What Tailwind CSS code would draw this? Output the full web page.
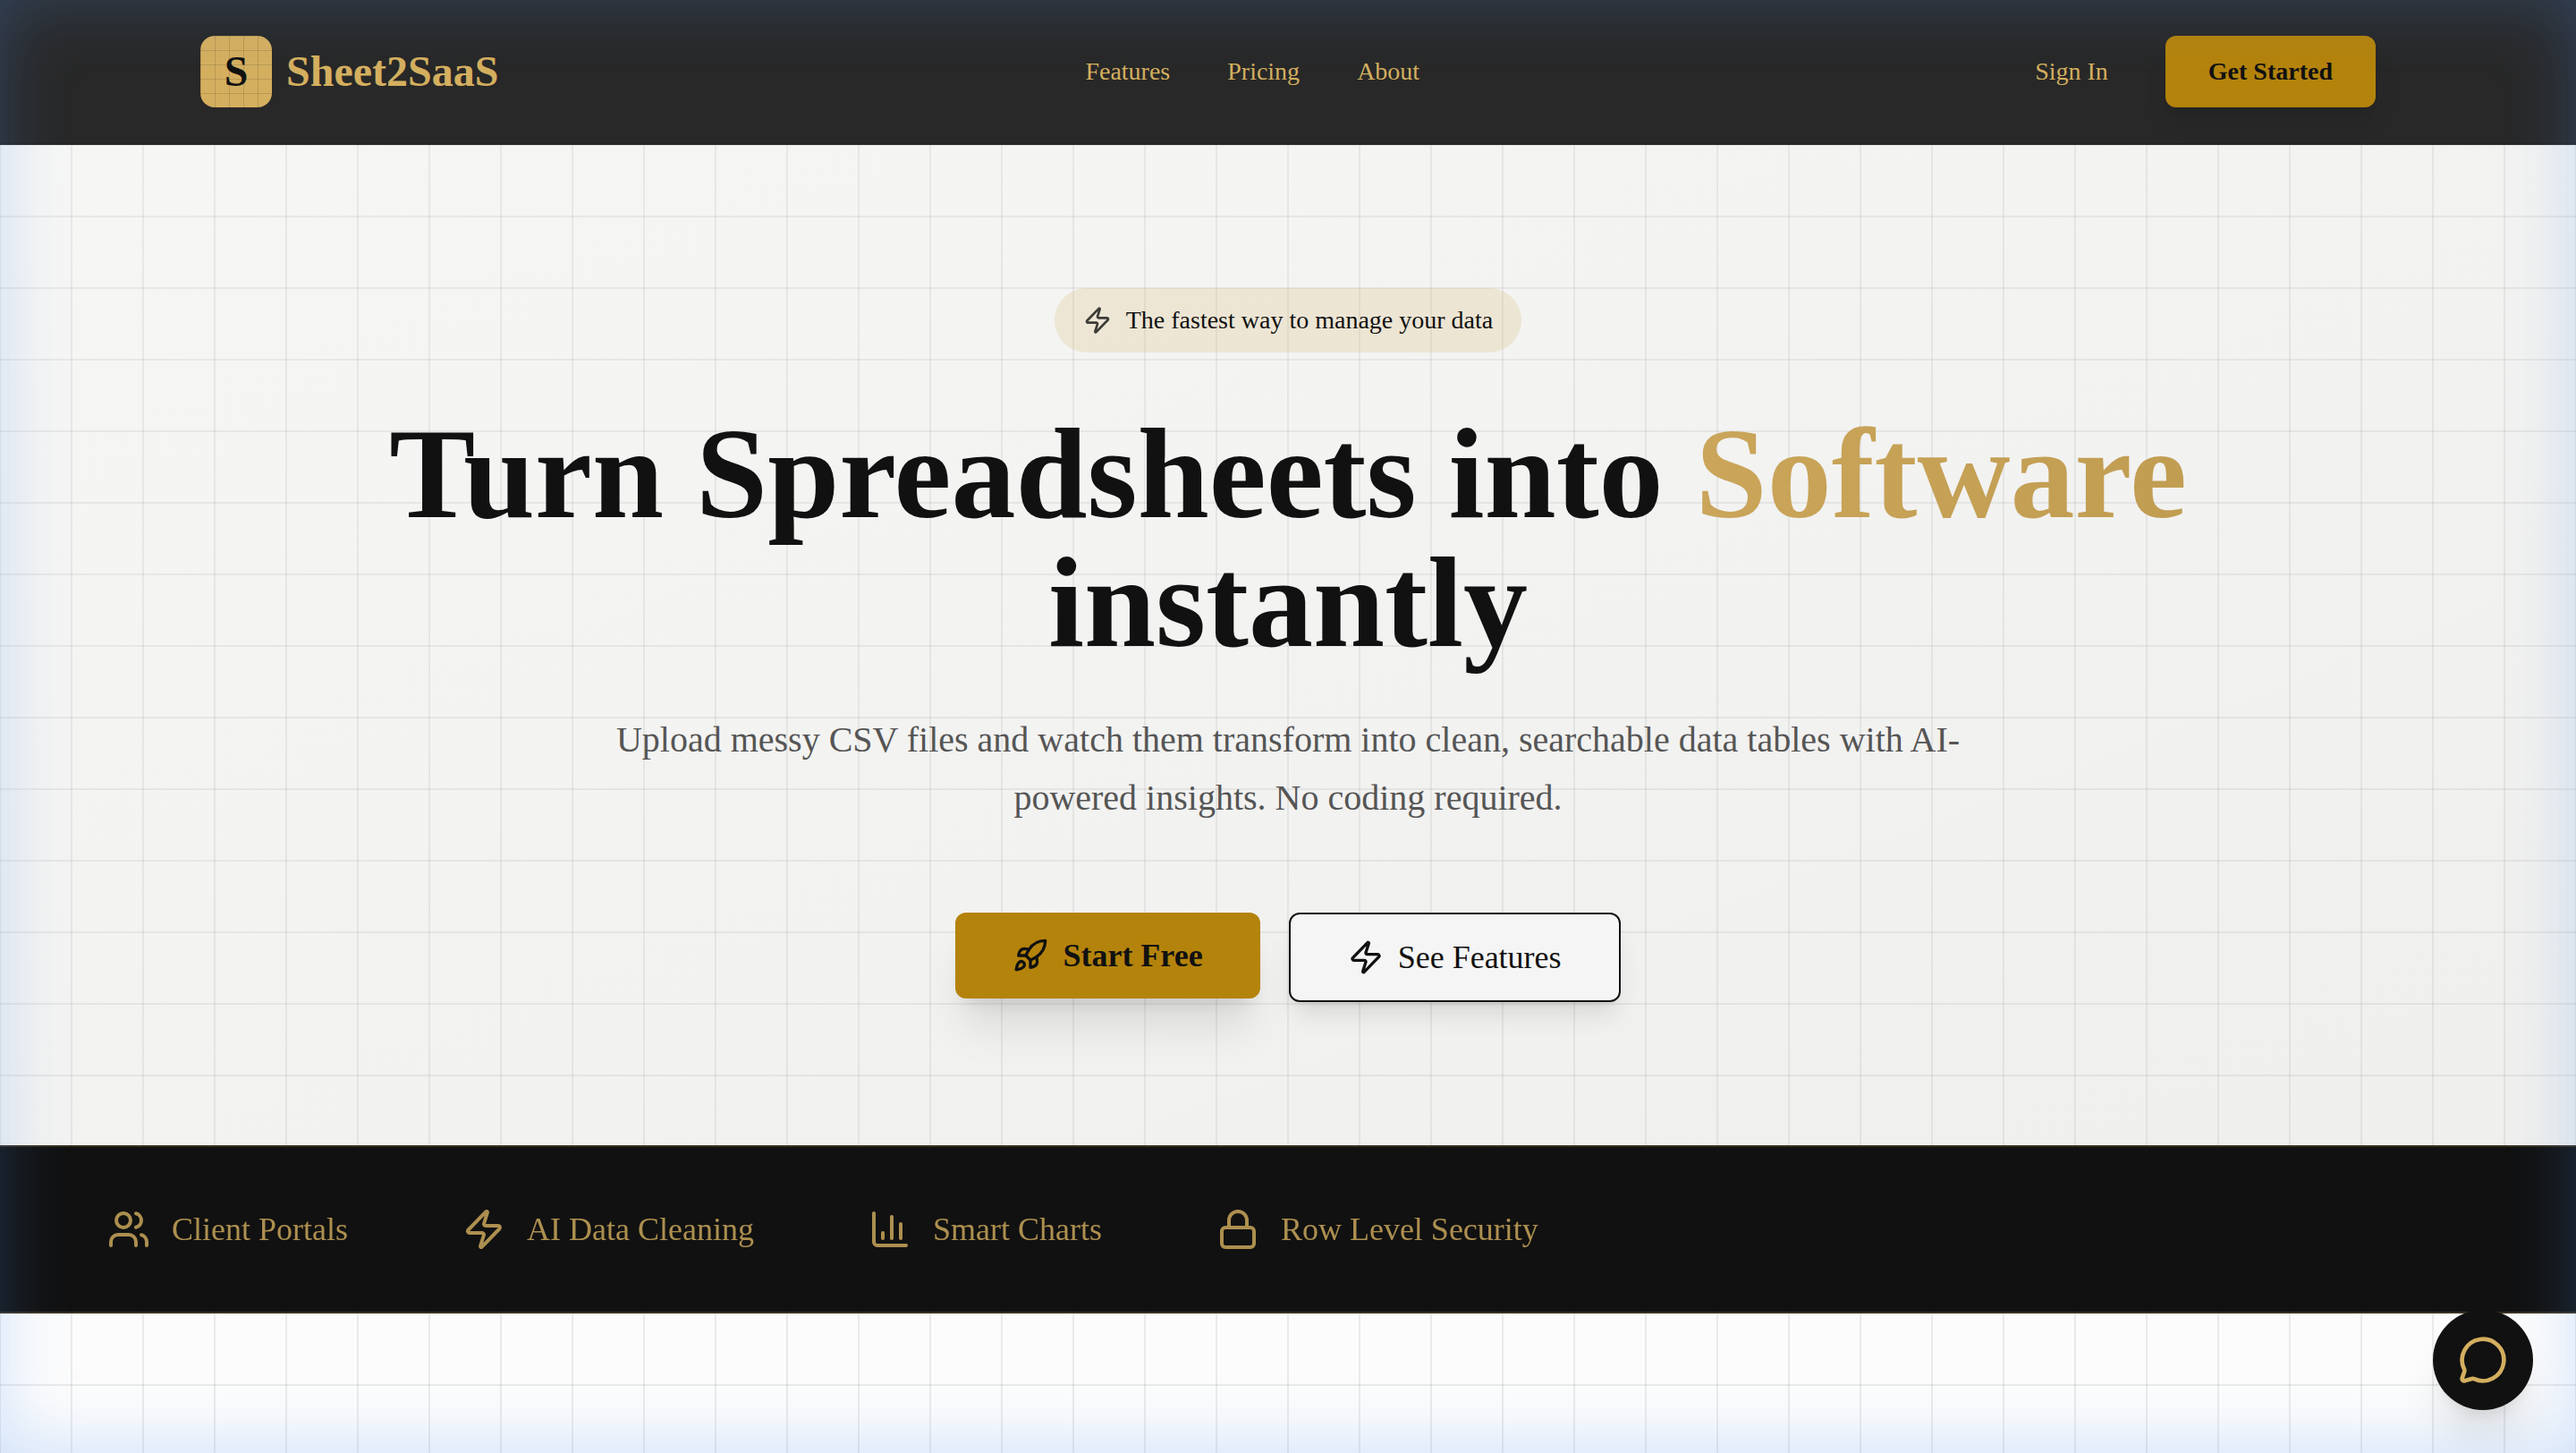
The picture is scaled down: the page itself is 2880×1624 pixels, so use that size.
<!DOCTYPE html>
<html lang="en">
<head>
<meta charset="utf-8">
<meta name="viewport" content="width=device-width, initial-scale=1">
<title>Sheet2SaaS</title>
<script src="https://cdn.jsdelivr.net/npm/@tailwindcss/browser@4"></script>
</head>
<body class="flex min-h-screen flex-col bg-[#fcfcfc] font-['Liberation_Serif',serif] text-[#111111]">

<svg class="hidden" aria-hidden="true">
  <symbol id="zap" viewBox="0 0 24 24"><path d="M4 14a1 1 0 0 1-.78-1.63l9.9-10.2a.5.5 0 0 1 .86.46l-1.92 6.02A1 1 0 0 0 13 10h7a1 1 0 0 1 .78 1.63l-9.9 10.2a.5.5 0 0 1-.86-.46l1.92-6.02A1 1 0 0 0 11 14z"/></symbol>
</svg>

<header class="sticky top-0 z-10 border-b-2 border-[#111111]/5 bg-[#111111]/90">
  <div class="mx-auto flex max-w-[2560px] items-center justify-between px-16 py-10">
    <a href="#" class="flex items-center gap-4">
      <span class="flex size-20 items-center justify-center rounded-2xl bg-[#d4af5f] bg-[linear-gradient(to_right,rgb(0_0_0/0.12)_1px,transparent_1px),linear-gradient(to_bottom,rgb(0_0_0/0.12)_1px,transparent_1px)] bg-size-[16px_16px] text-5xl font-bold">S</span>
      <span class="text-5xl font-bold text-[#d4af5f]">Sheet2SaaS</span>
    </a>
    <nav class="flex items-center gap-16 text-[28px] leading-10 text-[#d4af5f]">
      <a href="#features">Features</a>
      <a href="#pricing">Pricing</a>
      <a href="#about">About</a>
    </nav>
    <div class="flex items-center gap-8 text-[28px] leading-10">
      <a href="#signin" class="px-8 text-[#d4af5f]">Sign In</a>
      <button type="button" class="h-20 rounded-xl bg-[#b4830c] px-12 font-bold shadow-[0_20px_30px_-6px_rgb(0_0_0/0.1),0_8px_12px_-8px_rgb(0_0_0/0.1)]">Get Started</button>
    </div>
  </div>
</header>

<main class="flex grow flex-col">
  <section class="bg-[linear-gradient(to_right,rgb(0_0_0/0.06)_1px,transparent_1px,transparent_79px,rgb(0_0_0/0.06)_79px),linear-gradient(to_bottom,rgb(0_0_0/0.06)_1px,transparent_1px,transparent_79px,rgb(0_0_0/0.06)_79px),linear-gradient(to_bottom_right,#f6f6f5,#efefed)] bg-size-[80px_80px,80px_80px,auto] px-16 py-40">
    <div class="mx-auto flex max-w-[2048px] flex-col items-center text-center">
      <p class="flex items-center gap-4 rounded-full bg-[#d4ad5f]/20 px-8 py-4 text-[28px] leading-10">
        <svg class="size-8 fill-none stroke-current stroke-2 opacity-80 [stroke-linecap:round] [stroke-linejoin:round]" aria-hidden="true"><use href="#zap"/></svg>
        The fastest way to manage your data
      </p>
      <h1 class="mt-16 text-[144px] leading-[144px] font-bold">Turn Spreadsheets into <span class="bg-linear-to-r from-[#caa55a] to-[#c19d52] bg-clip-text text-transparent">Software</span> instantly</h1>
      <p class="mt-12 max-w-[1536px] text-[40px] leading-[65px] text-[#555555]">Upload messy CSV files and watch them transform into clean, searchable data tables with AI-powered insights. No coding required.</p>
      <div class="mt-24 flex items-start gap-8 text-4xl">
        <button type="button" class="flex h-24 items-center gap-4 rounded-xl bg-[#b4830c] px-16 font-bold shadow-[0_40px_50px_-10px_rgb(0_0_0/0.1),0_16px_20px_-12px_rgb(0_0_0/0.1)]">
          <svg class="size-10 fill-none stroke-current stroke-2 [stroke-linecap:round] [stroke-linejoin:round]" viewBox="0 0 24 24" aria-hidden="true"><path d="M4.5 16.5c-1.5 1.26-2 5-2 5s3.74-.5 5-2c.71-.84.7-2.13-.09-2.91a2.18 2.18 0 0 0-2.91-.09z"/><path d="m12 15-3-3a22 22 0 0 1 2-3.95A12.88 12.88 0 0 1 22 2c0 2.72-.78 7.5-6 11a22.35 22.35 0 0 1-4 2z"/><path d="M9 12H4s.55-3.03 2-4c1.62-1.08 5 0 5 0"/><path d="M12 15v5s3.03-.55 4-2c1.08-1.62 0-5 0-5"/></svg>
          Start Free
        </button>
        <button type="button" class="flex h-[100px] items-center gap-4 rounded-xl border-2 border-[#111111] bg-[#f5f5f5] px-16 shadow-[0_20px_30px_-6px_rgb(0_0_0/0.1),0_8px_12px_-8px_rgb(0_0_0/0.1)]">
          <svg class="size-10 fill-none stroke-current stroke-2 [stroke-linecap:round] [stroke-linejoin:round]" aria-hidden="true"><use href="#zap"/></svg>
          See Features
        </button>
      </div>
    </div>
  </section>

  <section class="overflow-hidden border-y-2 border-[#d4af5f]/20 bg-[#111111] py-16" aria-label="Highlights">
    <ul class="flex items-center gap-32 pl-[120px] text-4xl leading-14 whitespace-nowrap text-[#d4af5f] opacity-80">
      <li class="flex items-center gap-6">
        <svg class="size-12 fill-none stroke-current stroke-2 [stroke-linecap:round] [stroke-linejoin:round]" viewBox="0 0 24 24" aria-hidden="true"><path d="M16 21v-2a4 4 0 0 0-4-4H6a4 4 0 0 0-4 4v2"/><circle cx="9" cy="7" r="4"/><path d="M22 21v-2a4 4 0 0 0-3-3.87"/><path d="M16 3.13a4 4 0 0 1 0 7.75"/></svg>
        Client Portals
      </li>
      <li class="flex items-center gap-6">
        <svg class="size-12 fill-none stroke-current stroke-2 [stroke-linecap:round] [stroke-linejoin:round]" aria-hidden="true"><use href="#zap"/></svg>
        AI Data Cleaning
      </li>
      <li class="flex items-center gap-6">
        <svg class="size-12 fill-none stroke-current stroke-2 [stroke-linecap:round] [stroke-linejoin:round]" viewBox="0 0 24 24" aria-hidden="true"><path d="M3 3v16a2 2 0 0 0 2 2h16"/><path d="M18 17V9"/><path d="M13 17V5"/><path d="M8 17v-3"/></svg>
        Smart Charts
      </li>
      <li class="flex items-center gap-6">
        <svg class="size-12 fill-none stroke-current stroke-2 [stroke-linecap:round] [stroke-linejoin:round]" viewBox="0 0 24 24" aria-hidden="true"><rect width="18" height="11" x="3" y="11" rx="2"/><path d="M7 11V7a5 5 0 0 1 10 0v4"/></svg>
        Row Level Security
      </li>
    </ul>
  </section>

  <section id="features" class="grow bg-[linear-gradient(to_right,rgb(0_0_0/0.07)_1px,transparent_1px,transparent_79px,rgb(0_0_0/0.07)_79px),linear-gradient(to_bottom,rgb(0_0_0/0.07)_1px,transparent_1px,transparent_79px,rgb(0_0_0/0.07)_79px)] bg-size-[80px_80px]"></section>
</main>

<!-- soft blue glow along the window edges -->
<div class="pointer-events-none fixed inset-0 z-20 shadow-[inset_0_0_80px_rgb(90_155_245/0.24),inset_0_-30px_80px_-30px_rgb(90_155_245/0.08)]"></div>

<button type="button" aria-label="Open chat" class="fixed right-12 bottom-12 z-30 flex size-28 items-center justify-center rounded-full bg-[#111111] text-[#d4af5f] shadow-[0_40px_50px_-10px_rgb(0_0_0/0.1),0_16px_20px_-12px_rgb(0_0_0/0.1)]">
  <svg class="size-14 fill-none stroke-current stroke-2 [stroke-linecap:round] [stroke-linejoin:round]" viewBox="0 0 24 24" aria-hidden="true"><path d="M2.992 16.342a2 2 0 0 1 .094 1.167l-1.065 3.29a1 1 0 0 0 1.236 1.168l3.413-.998a2 2 0 0 1 1.099.092 10 10 0 1 0-4.777-4.719"/></svg>
</button>
</body>
</html>
